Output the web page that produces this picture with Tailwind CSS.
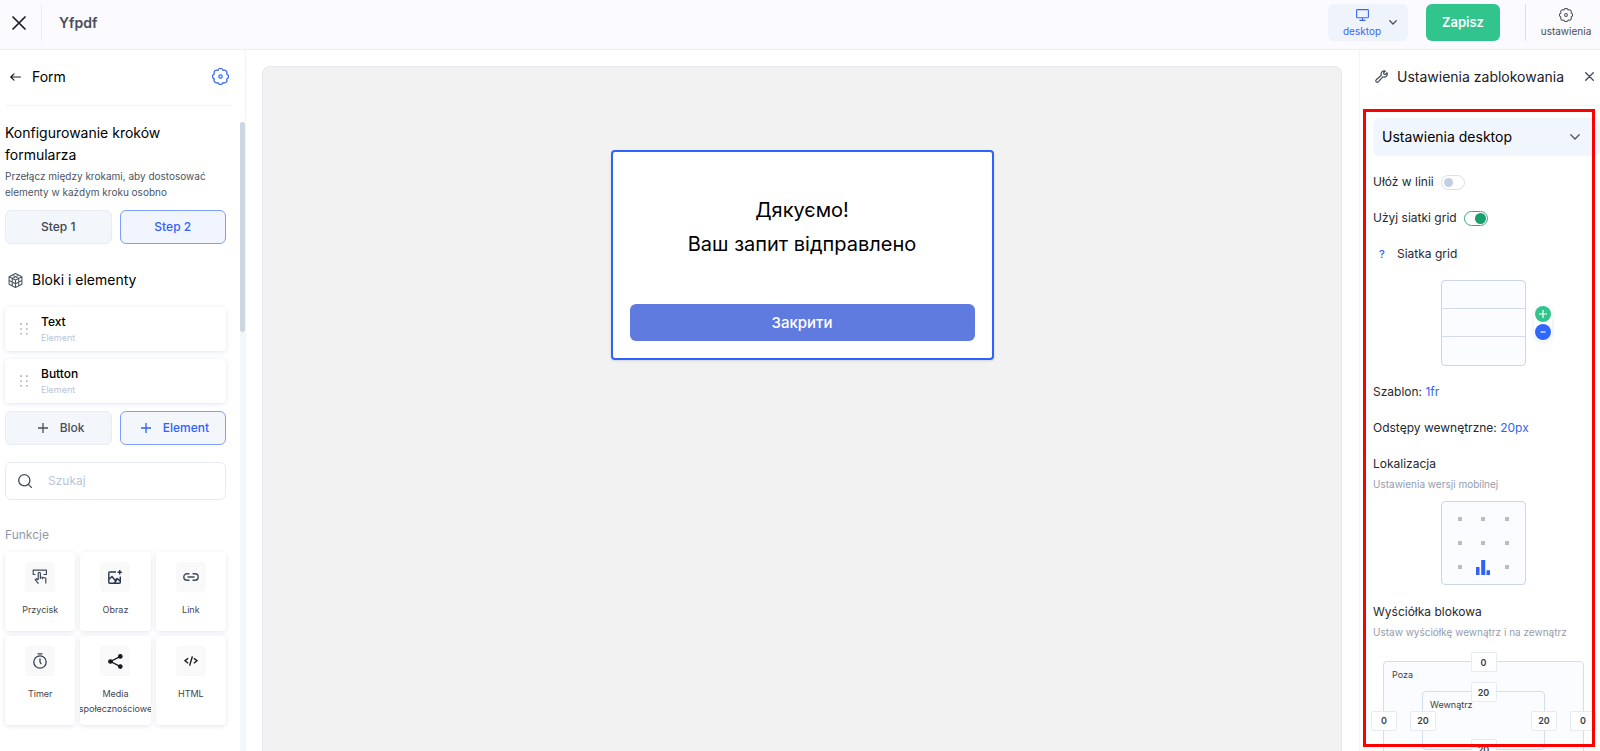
<!DOCTYPE html>
<html lang="pl">
<head>
<meta charset="utf-8">
<title>Yfpdf</title>
<meta name="viewport" content="width=device-width, initial-scale=1">
<script src="https://cdn.jsdelivr.net/npm/@tailwindcss/browser@4"></script>
</head>
<body class="flex h-screen flex-col overflow-hidden bg-white font-['Inter',sans-serif] text-xs text-black">

<header class="flex h-[50px] shrink-0 items-center border-b border-[#eeeff6] bg-[#fafaff] pb-1">
  <button aria-label="Zamknij" class="flex w-[37px] justify-end pr-[11px] shrink-0">
    <svg class="size-[14px]" viewBox="0 0 14 14" fill="none" stroke="#1b1e24" stroke-width="1.7" stroke-linecap="round"><path d="M1 1l12 12M13 1L1 13"/></svg>
  </button>
  <div class="ml-1 h-[37px] w-px bg-[#e9ebf3]"></div>
  <h1 class="ml-[17px] flex-1 text-sm font-semibold leading-5 text-[#4a4e57]">Yfpdf</h1>
  <button class="flex h-[37px] w-20 items-center rounded-md bg-[#eff3fc] pl-[15px] text-[#3b66f5]">
    <span class="flex w-[38px] flex-col items-center gap-1">
      <svg class="h-3 w-[13px]" viewBox="0 0 13 12" fill="none" stroke="currentColor" stroke-width="1.1"><rect x=".6" y=".6" width="11.800" height="8.200" rx=".8"/><path d="M6.500 9v2.400M3.500 11.400h6"/></svg>
      <span class="text-[10px] leading-3">desktop</span>
    </span>
    <svg class="ml-2 h-[5px] w-2" viewBox="0 0 8 5" fill="none" stroke="#4a505c" stroke-width="1.300" stroke-linecap="round"><path d="M.8.7L4 4 7.200.7"/></svg>
  </button>
  <button class="ml-[18px] h-[37px] w-[74px] rounded-md bg-[#31c48d] text-[13px] font-semibold text-white">Zapisz</button>
  <div class="ml-[25px] h-[37px] w-px bg-[#dcdfe8]"></div>
  <button class="flex w-[74px] flex-col items-center gap-[3px] pl-[6px] text-[#4a4e57]">
    <svg class="size-[14px]" viewBox="0 0 18 18" fill="none" stroke="currentColor" stroke-width="1.300" stroke-linejoin="round"><path d="M6.320 2.530a2.800 2.800 0 0 1 5.360 0a2.800 2.800 0 0 1 3.790 3.790a2.800 2.800 0 0 1 0 5.360a2.800 2.800 0 0 1-3.790 3.790a2.800 2.800 0 0 1-5.360 0a2.800 2.800 0 0 1-3.790-3.790a2.800 2.800 0 0 1 0-5.360a2.800 2.800 0 0 1 3.790-3.790z"/><circle cx="9" cy="9" r="1.800"/></svg>
    <span class="text-[10px] leading-3">ustawienia</span>
  </button>
</header>

<div class="flex min-h-0 flex-1">

  <aside class="flex w-[246px] shrink-0 flex-col border-r border-[#f1f4f8]">
    <div class="ml-[6px] mr-[14px] flex h-14 shrink-0 items-center border-b border-[#f1f2f4] pb-[2px]">
      <button aria-label="Wstecz" class="flex w-[26px] pl-1"><svg class="h-2 w-[11px]" viewBox="0 0 11 8" fill="none" stroke="#1b1e24" stroke-width="1.200" stroke-linecap="round" stroke-linejoin="round"><path d="M10.400 4H.8M4 .8L.8 4 4 7.200"/></svg></button>
      <h2 class="flex-1 text-sm leading-5">Form</h2>
      <button aria-label="Ustawienia formularza" class="mr-[2px] text-[#2f66fb]">
        <svg class="size-[17px]" viewBox="0 0 18 18" fill="none" stroke="currentColor" stroke-width="1.300" stroke-linejoin="round"><path d="M6.320 2.530a2.800 2.800 0 0 1 5.360 0a2.800 2.800 0 0 1 3.790 3.790a2.800 2.800 0 0 1 0 5.360a2.800 2.800 0 0 1-3.790 3.790a2.800 2.800 0 0 1-5.360 0a2.800 2.800 0 0 1-3.790-3.790a2.800 2.800 0 0 1 0-5.360a2.800 2.800 0 0 1 3.790-3.790z"/><circle cx="9" cy="9" r="1.800"/></svg>
      </button>
    </div>

    <div class="mt-4 flex min-h-0 flex-1">
      <div class="min-w-0 flex-1 overflow-hidden pl-[5px] pr-[14px]">
        <h3 class="text-sm leading-[22px]">Konfigurowanie kroków formularza</h3>
        <p class="mt-[2px] text-[10px] leading-4 text-[#4b5563]">Przełącz między krokami, aby dostosować elementy w każdym kroku osobno</p>
        <div class="mt-[10px] grid grid-cols-2 gap-2 font-medium">
          <button class="h-[34px] rounded-md border border-[#e8ebf1] bg-[#f3f6fa] text-[#3f444d]">Step 1</button>
          <button class="h-[34px] rounded-md border border-[#7f9dfb] bg-[#f0f5ff] text-[#2f62fb]">Step 2</button>
        </div>

        <div class="mt-[25px] flex h-[22px] items-center pl-[3px]">
          <svg class="size-[15px]" viewBox="0 0 14 14" fill="none" stroke="#4b5563" stroke-width="1" stroke-linejoin="round"><path d="M7 .5l6 3v7l-6 3-6-3v-7zM1 3.500l6 3 6-3M7 6.500v7M4 2l6 3v7M10 2L4 5v7M1 7l6 3 6-3"/></svg>
          <h3 class="ml-[9px] text-sm">Bloki i elementy</h3>
        </div>

        <ul class="mt-4 flex flex-col gap-2">
          <li class="flex h-11 items-center rounded bg-white pl-[15px] shadow-[0_1px_5px_#dfe6ee]">
            <svg class="mr-[13px] h-3 w-2" viewBox="0 0 8 12" fill="#a5adba"><path d="M.3.3h1.600v1.600H.3zM6 .3h1.600v1.600H6zM.3 5.200h1.600v1.600H.3zM6 5.200h1.600v1.600H6zM.3 10h1.600v1.600H.3zM6 10h1.600v1.600H6z"/></svg>
            <div><p class="font-medium leading-[18px]">Text</p><p class="text-[9px] leading-[14px] text-[#b9c5d8]">Element</p></div>
          </li>
          <li class="flex h-11 items-center rounded bg-white pl-[15px] shadow-[0_1px_5px_#dfe6ee]">
            <svg class="mr-[13px] h-3 w-2" viewBox="0 0 8 12" fill="#a5adba"><path d="M.3.3h1.600v1.600H.3zM6 .3h1.600v1.600H6zM.3 5.200h1.600v1.600H.3zM6 5.200h1.600v1.600H6zM.3 10h1.600v1.600H.3zM6 10h1.600v1.600H6z"/></svg>
            <div><p class="font-medium leading-[18px]">Button</p><p class="text-[9px] leading-[14px] text-[#b9c5d8]">Element</p></div>
          </li>
        </ul>

        <div class="mt-2 grid grid-cols-2 gap-2 font-medium">
          <button class="flex h-[34px] items-center justify-end gap-3 rounded-md border border-[#e8ebf1] bg-[#f3f6fa] pr-[26px] text-[#4a4f58]"><svg class="size-[10px]" viewBox="0 0 10 10" stroke="currentColor" stroke-width="1.300"><path d="M5 0v10M0 5h10"/></svg>Blok</button>
          <button class="flex h-[34px] items-center justify-end gap-3 rounded-md border border-[#7f9dfb] bg-[#f3f7fc] pr-4 text-[#2f62fb]"><svg class="size-[10px]" viewBox="0 0 10 10" stroke="currentColor" stroke-width="1.300"><path d="M5 0v10M0 5h10"/></svg>Element</button>
        </div>

        <label class="mt-[17px] flex h-[38px] items-center rounded-md border border-[#e8eaf3] pl-3">
          <svg class="size-[14px] shrink-0" viewBox="0 0 14 14" fill="none" stroke="#414b5a" stroke-width="1.300" stroke-linecap="round"><circle cx="6.300" cy="6.300" r="5.600"/><path d="M10.400 10.400l3 3"/></svg>
          <input type="text" aria-label="Szukaj" placeholder="Szukaj" class="ml-4 w-full min-w-0 text-xs outline-none placeholder:text-[#b9c5d8]">
        </label>

        <h4 class="mt-[26px] leading-[18px] text-[#8c9ab0]">Funkcje</h4>
        <div class="mt-2 grid grid-cols-3 gap-[5px] text-[9px] leading-[15px] text-[#41464f]">
          <button class="flex h-[79px] flex-col items-center overflow-hidden rounded bg-white pt-[10px] shadow-[0_1px_5px_#dfe6ee]">
            <span class="mb-[10px] flex size-[30px] shrink-0 items-center justify-center rounded bg-[#f9f9fa]"><svg class="size-4" viewBox="0 0 16 16" fill="none" stroke="#414b5a" stroke-width="1.200" stroke-linejoin="round"><path d="M3.500 5.500H1.200V1.200h13.200v4.300h-3M6.200 11V4.500a1.100 1.100 0 0 1 2.200 0V8l5.400 1v5.500M6.200 11L4.500 9.700l-1.300 1 3.300 4M8.400 8v2M10.500 8.600v1.700"/></svg></span>Przycisk</button>
          <button class="flex h-[79px] flex-col items-center overflow-hidden rounded bg-white pt-[10px] shadow-[0_1px_5px_#dfe6ee]">
            <span class="mb-[10px] flex size-[30px] shrink-0 items-center justify-center rounded bg-[#f9f9fa]"><svg class="size-[14px]" viewBox="0 0 14 14" fill="none" stroke="#27364a" stroke-width="1.400" stroke-linejoin="round"><path d="M8 2H1.700a.9.9 0 0 0-.9.900v9.400c0 .5.400.9.900.9h9.700a.9.900 0 0 0 .9-.9V6.500M1 9.200l3-2.700 3 3.700 2-1.800 3 2.500M6 13l3-3"/><path d="M11.700 0v4.400M9.500 2.200h4.400"/></svg></span>Obraz</button>
          <button class="flex h-[79px] flex-col items-center overflow-hidden rounded bg-white pt-[10px] shadow-[0_1px_5px_#dfe6ee]">
            <span class="mb-[10px] flex size-[30px] shrink-0 items-center justify-center rounded bg-[#f9f9fa]"><svg class="h-2 w-4" viewBox="0 0 16 8" fill="none" stroke="#414b5a" stroke-width="1.400"><path d="M6.500.8H4a3.200 3.200 0 0 0 0 6.400h2.500M9.500.8H12a3.200 3.200 0 0 1 0 6.400H9.500M4.500 4h7"/></svg></span>Link</button>
          <button class="flex h-[89px] flex-col items-center overflow-hidden rounded bg-white pt-[10px] shadow-[0_1px_5px_#dfe6ee]">
            <span class="mb-[10px] flex size-[30px] shrink-0 items-center justify-center rounded bg-[#f9f9fa]"><svg class="h-4 w-[14px]" viewBox="0 0 14 16" fill="none" stroke="#344154" stroke-width="1.300" stroke-linecap="round"><circle cx="7" cy="9" r="6.200"/><path d="M5 .8h4M7 5.800V9l1 1.600"/></svg></span>Timer</button>
          <button class="flex h-[89px] flex-col items-center overflow-hidden rounded bg-white pt-[10px] shadow-[0_1px_5px_#dfe6ee]">
            <span class="mb-[10px] flex size-[30px] shrink-0 items-center justify-center rounded bg-[#f9f9fa]"><svg class="size-[15px]" viewBox="0 0 14 14" fill="#16181c" stroke="#16181c"><path d="M11.500 2.200L2.500 7l9 4.800" fill="none" stroke-width="1.200"/><circle cx="11.500" cy="2.300" r="1.700"/><circle cx="2.300" cy="7" r="1.700"/><circle cx="11.500" cy="11.700" r="1.700"/></svg></span>Media społecznościowe</button>
          <button class="flex h-[89px] flex-col items-center overflow-hidden rounded bg-white pt-[10px] shadow-[0_1px_5px_#dfe6ee]">
            <span class="mb-[10px] flex size-[30px] shrink-0 items-center justify-center rounded bg-[#f9f9fa]"><svg class="h-[10px] w-[14px]" viewBox="0 0 14 10" fill="none" stroke="#16181c" stroke-width="1.400"><path d="M4.200 2.200L1 4.700l3.200 2.500M9.800 2.200L13 4.700 9.800 7.200M8.400.4L5.600 9.600"/></svg></span>HTML</button>
        </div>
      </div>
      <div class="w-[5px] shrink-0 bg-[#f3f7fc]"><div class="h-[210px] rounded-full bg-[#ccd6e0]"></div></div>
    </div>
  </aside>

  <main class="flex min-w-0 flex-1 pl-4 pr-[17px] pt-4">
    <div class="flex flex-1 items-start justify-center rounded-t-lg border border-b-0 border-[#e8e9ed] bg-[#f2f2f2] pt-[83px]">
      <section class="flex w-[383px] flex-col rounded border-2 border-[#2f62fb] bg-white px-[17px] pb-[17px] pt-[41px] shadow-sm">
        <p class="text-center text-xl leading-[34px]">Дякуємо!<br>Ваш запит відправлено</p>
        <button class="mt-[43px] h-[37px] rounded-md bg-[#5f7be0] text-[15px] font-medium text-white">Закрити</button>
      </section>
    </div>
  </main>

  <aside class="relative flex w-[241px] shrink-0 flex-col overflow-hidden border-l border-[#f1f4f8] pl-[13px] text-[#26292f]">
    <div class="flex h-14 shrink-0 items-center border-b border-[#f1f2f4] pb-[2px] pr-[6px]">
      <svg class="ml-[2px] size-[13px]" viewBox="0 0 13 13" fill="none" stroke="#414b5a" stroke-width="1.200" stroke-linejoin="round"><path d="M10.300 1.100L8.600 2.800l.3 1.400 1.400.3 1.800-1.700a3.200 3.200 0 0 1-4.300 4L3.300 11.900a1.400 1.400 0 0 1-2.100-2.100L6.300 5.300a3.200 3.200 0 0 1 4-4.200z"/><path d="M2.300 10.800h.1"/></svg>
      <h2 class="ml-[9px] flex-1 whitespace-nowrap text-sm text-[#1d2026]">Ustawienia zablokowania</h2>
      <button aria-label="Zamknij panel"><svg class="size-[9px]" viewBox="0 0 9 9" stroke="#414b5a" stroke-width="1.300" stroke-linecap="round"><path d="M.7.700l7.600 7.600M8.300.7L.7 8.300"/></svg></button>
    </div>

    <button class="mt-3 flex h-[38px] shrink-0 items-center justify-between rounded-md bg-[#f1f5fe] pl-[9px] pr-5 text-sm text-black">Ustawienia desktop
      <svg class="h-[6px] w-[10px]" viewBox="0 0 10 6" fill="none" stroke="#4a5566" stroke-width="1.300" stroke-linecap="round"><path d="M.8.800L5 5 9.200.8"/></svg>
    </button>

    <label class="mt-[17px] flex h-[18px] shrink-0 items-center gap-[7px]">Ułóż w linii
      <input type="checkbox" class="h-[15px] w-6 appearance-none rounded-full border border-[#d5dfee] bg-white before:ml-[2px] before:mt-[2px] before:block before:size-[9px] before:rounded-full before:bg-[#c2cfe3]">
    </label>
    <label class="mt-[18px] flex h-[18px] shrink-0 items-center gap-[7px]">Użyj siatki grid
      <input type="checkbox" checked class="h-[15px] w-6 appearance-none rounded-full border border-[#36ab7d] bg-white before:ml-[10px] before:mt-px before:block before:size-[11px] before:rounded-full before:bg-[#16a06c]">
    </label>
    <div class="mt-[18px] flex h-[18px] shrink-0 items-center"><button aria-label="Pomoc" class="w-6 pl-[6px] text-left text-[11px] font-medium text-[#2f62fb]">?</button>Siatka grid</div>

    <div class="mt-[17px] flex shrink-0 items-center pl-[68px]">
      <div class="grid h-[86px] w-[85px] grid-rows-3 divide-y divide-[#d3dbe6] rounded border border-[#cbd6e6] bg-[#fafcff]"><div></div><div></div><div></div></div>
      <div class="ml-2 flex flex-col gap-[2px] rounded-full p-px shadow-[0_1px_5px_#dfe6ee]">
        <button aria-label="Dodaj wiersz" class="flex size-4 items-center justify-center rounded-full bg-[#31c48d]"><svg class="size-2" viewBox="0 0 8 8" stroke="#fff" stroke-width="1.200"><path d="M4 0v8M0 4h8"/></svg></button>
        <button aria-label="Usuń wiersz" class="flex size-4 items-center justify-center rounded-full bg-[#2f66fb]"><svg class="size-2" viewBox="0 0 8 8" stroke="#fff" stroke-width="1.200"><path d="M1.500 4h5"/></svg></button>
      </div>
    </div>

    <p class="mt-[17px] shrink-0 leading-[18px]">Szablon: <button class="text-[#2f62fb]">1fr</button></p>
    <p class="mt-[18px] shrink-0 leading-[18px]">Odstępy wewnętrzne: <button class="text-[#2f62fb]">20px</button></p>

    <h3 class="mt-[18px] shrink-0 leading-[18px]">Lokalizacja</h3>
    <p class="mt-[3px] shrink-0 text-[10px] leading-4 text-[#929dae]">Ustawienia wersji mobilnej</p>
    <div class="mt-[9px] shrink-0 pl-[68px]">
      <div class="grid h-[84px] w-[85px] grid-cols-3 grid-rows-3 place-items-center rounded border border-[#cbd6e6] bg-[#fafcff] px-[6px] py-[5px]">
        <i class="size-1 bg-[#bdbdbd]"></i><i class="size-1 bg-[#bdbdbd]"></i><i class="size-1 bg-[#bdbdbd]"></i>
        <i class="size-1 bg-[#bdbdbd]"></i><i class="size-1 bg-[#bdbdbd]"></i><i class="size-1 bg-[#bdbdbd]"></i>
        <i class="size-1 bg-[#bdbdbd]"></i>
        <svg class="h-[15px] w-[14px]" viewBox="0 0 14 15" fill="#2f62fb"><path d="M0 7h3.500v8H0zM5.200 0h4v15h-4zM10.500 10.200H14V15h-3.500z"/></svg>
        <i class="size-1 bg-[#bdbdbd]"></i>
      </div>
    </div>

    <h3 class="mt-[18px] shrink-0 leading-[18px]">Wyściółka blokowa</h3>
    <p class="mt-[3px] shrink-0 text-[10px] leading-4 text-[#929dae]">Ustaw wyściółkę wewnątrz i na zewnątrz</p>

    <div class="relative ml-[10px] mr-4 mt-[21px] h-[119px] shrink-0 rounded border border-[#d3deed] bg-[#fafcff] px-[38px] py-[29px] text-[9px] leading-3 text-[#3a3f48]">
      <span class="absolute left-2 top-[7px]">Poza</span>
      <div class="relative h-full rounded border border-[#d3deed]">
        <span class="absolute left-[7px] top-[7px]">Wewnątrz</span>
        <input aria-label="Wewnątrz góra" value="20" class="absolute left-1/2 top-0 h-5 w-[26px] -translate-1/2 rounded-xs border border-[#e6eaf2] bg-white text-center font-semibold">
        <input aria-label="Wewnątrz lewo" value="20" class="absolute left-0 top-1/2 h-5 w-[26px] -translate-1/2 rounded-xs border border-[#e6eaf2] bg-white text-center font-semibold">
        <input aria-label="Wewnątrz prawo" value="20" class="absolute left-full top-1/2 h-5 w-[26px] -translate-1/2 rounded-xs border border-[#e6eaf2] bg-white text-center font-semibold">
        <input aria-label="Wewnątrz dół" value="20" class="absolute left-1/2 top-full h-5 w-[26px] -translate-1/2 rounded-xs border border-[#e6eaf2] bg-white text-center font-semibold">
      </div>
      <input aria-label="Poza góra" value="0" class="absolute left-1/2 top-0 h-5 w-[26px] -translate-1/2 rounded-xs border border-[#e6eaf2] bg-white text-center font-semibold">
      <input aria-label="Poza lewo" value="0" class="absolute left-0 top-1/2 h-5 w-[26px] -translate-1/2 rounded-xs border border-[#e6eaf2] bg-white text-center font-semibold">
      <input aria-label="Poza prawo" value="0" class="absolute left-full top-1/2 h-5 w-[26px] -translate-1/2 rounded-xs border border-[#e6eaf2] bg-white text-center font-semibold">
    </div>

    <div class="pointer-events-none absolute bottom-1 left-[3px] right-[5px] top-[59px] border-3 border-[#ff0000]"></div>
  </aside>
</div>
</body>
</html>
